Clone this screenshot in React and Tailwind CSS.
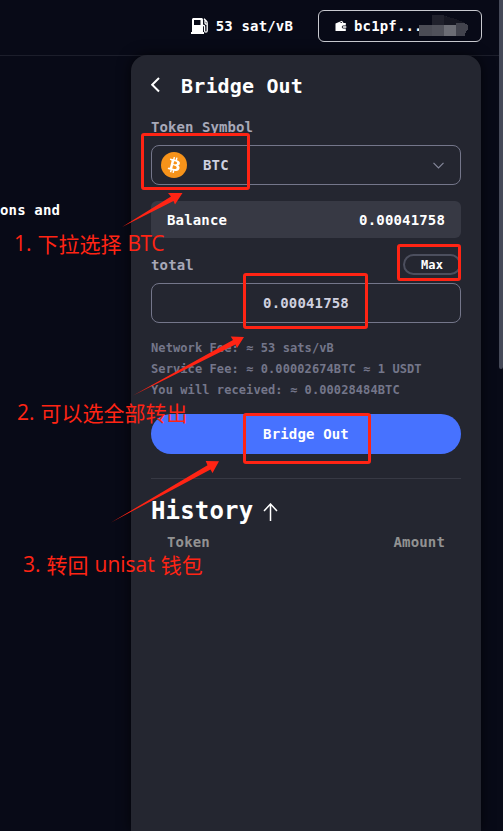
import React from "react";

const fees = [
  "Network Fee: ≈ 53 sats/vB",
  "Service Fee: ≈ 0.00002674BTC ≈ 1 USDT",
  "You will received: ≈ 0.00028484BTC",
];

function GasIcon() {
  return (
    <svg width="18" height="17" viewBox="0 0 18 17" fill="none">
      <path fill="#fff" fillRule="evenodd" d="M1 1.500C1 .7 1.700 0 2.500 0h8C11.300 0 12 .7 12 1.500V14h1v2H0v-2h1zM3 2v5h6.500V2z" />
      <path stroke="#fff" strokeWidth="1.300" d="M12 7.500h.8c.6 0 .8.5.8 1.200v4c0 2 2.600 2 2.600 0V5c0-1-.6-1.600-1.200-2.200L13 .8M14 2v3c0 .8.7 1.200 2.200 1.200" />
    </svg>
  );
}

function WalletIcon() {
  return (
    <svg width="12" height="12" viewBox="0 0 12 12">
      <path fill="#fff" fillRule="evenodd" d="M.5 3.500L7 .8 8.600 3h2.200v2.500H8.200c-1.800 0-1.800 3 0 3h2.600V11H.5zM4.500 3H7.300L6.700 2zM8.300 6.300h3v1.400h-3c-.9 0-.9-1.400 0-1.400z" />
    </svg>
  );
}

function Mosaic() {
  return (
    <svg className="-ml-1 -mt-0.5 shrink-0" width="49" height="21" viewBox="0 0 49 21" shapeRendering="crispEdges">
      <path fill="#20212c" d="M13 0h10l10 3v7H13z" />
      <path fill="#161722" d="M25 1l12 3 9 4v2H25z" />
      <path fill="#4b4c55" d="M0 10h13v11H0z" />
      <path fill="#50515a" d="M13 10h12v11H13z" />
      <path fill="#6b6c74" d="M25 10h12v11H25z" />
      <path fill="#42434d" d="M37 8h8l4 2v4l-2 2-1 5h-9z" />
    </svg>
  );
}

function BtcIcon() {
  return (
    <svg width="26" height="26" viewBox="0 0 32 32">
      <circle cx="16" cy="16" r="16" fill="#f7931a" />
      <path
        fill="#fff"
        d="M23.189 14.020c.314-2.096-1.283-3.223-3.465-3.975l.708-2.840-1.728-.43-.69 2.765c-.454-.114-.92-.22-1.385-.326l.695-2.783L15.596 6l-.708 2.839c-.376-.086-.746-.17-1.104-.26l.002-.009-2.384-.595-.46 1.846s1.283.294 1.256.312c.7.175.826.638.805 1.006l-.806 3.235c.048.012.110.030.180.057l-.183-.045-1.130 4.532c-.086.212-.303.531-.793.410.018.025-1.256-.313-1.256-.313l-.858 1.978 2.250.561c.418.105.828.215 1.231.318l-.715 2.872 1.727.430.708-2.840c.472.127.930.245 1.378.357l-.706 2.828 1.728.430.715-2.866c2.948.558 5.164.333 6.097-2.333.752-2.146-.037-3.385-1.588-4.192 1.130-.260 1.980-1.003 2.207-2.538zm-3.950 5.538c-.533 2.147-4.148.986-5.320.695l.950-3.805c1.172.293 4.929.872 4.370 3.110zm.535-5.569c-.487 1.953-3.495.960-4.470.717l.860-3.450c.975.243 4.118.696 3.610 2.733z"
      />
    </svg>
  );
}

function Header() {
  return (
    <header className="flex h-14 items-start justify-end border-b border-[#1c1e2b] pr-[17px] pt-2.5 text-[14px] font-bold text-white">
      <div className="mr-[25px] flex h-8 items-center gap-[7px]">
        <GasIcon />
        <span>53 sat/vB</span>
      </div>
      <div className="flex h-8 w-[164px] items-center rounded-md border border-[#c9cad0] pl-4">
        <WalletIcon />
        <span className="ml-[7px]">bc1pf...</span>
        <Mosaic />
      </div>
    </header>
  );
}

function BridgePanel() {
  return (
    <section className="-mt-px h-[776px] w-[350px] rounded-t-2xl bg-[#242630] px-5 pt-[15px] text-[14px] font-bold leading-5 shadow-[0_0_14px_#000000aa]">
      <div className="flex h-8 items-center text-xl text-white">
        <svg className="-mt-0.5" width="9" height="16" viewBox="0 0 9 16" fill="none" stroke="#fff" strokeWidth="2">
          <path d="M8 1L1.200 7.700 8 14.500" />
        </svg>
        <h1 className="ml-[21px]">Bridge Out</h1>
      </div>
      <div className="mt-[15px] tracking-[0.08px] text-[#a7a8b8]">Token Symbol</div>
      <div className="mt-2 flex h-10 items-center rounded-lg border border-[#74768a] pl-[9px] pr-4 text-[#cfd0df]">
        <BtcIcon />
        <span className="ml-4">BTC</span>
        <svg className="ml-auto" width="11" height="7" viewBox="0 0 11 7" fill="none" stroke="#85879a" strokeWidth="1.200">
          <path d="M.5.8l5 5 5-5" />
        </svg>
      </div>
      <div className="mt-4 flex h-[37px] items-center justify-between rounded-md bg-[#373944] px-4 text-white">
        <span>Balance</span>
        <span>0.00041758</span>
      </div>
      <div className="mt-4 flex h-[21px] items-center justify-between text-[#a7a8b8]">
        <span>total</span>
        <button className="h-[21px] w-[58px] rounded-full border-2 border-[#4c4f5e] pt-px text-xs leading-[17px] text-white">Max</button>
      </div>
      <div className="mt-2 flex h-10 items-center justify-center rounded-lg border border-[#74768a] text-[#cfd0df]">0.00041758</div>
      <div className="mt-[15px] text-xs leading-[21px] tracking-[0.09px] text-[#74768a]">
        {fees.map((fee) => (
          <div key={fee}>{fee}</div>
        ))}
      </div>
      <button className="mt-[13px] h-10 w-full rounded-full bg-[#4772ff] text-white">Bridge Out</button>
      <div className="mt-6 flex h-16 items-center gap-2.5 border-t border-[#373944] text-2xl text-white">
        <h2>History</h2>
        <svg className="mt-0.5" width="15" height="18" viewBox="0 0 15 18" fill="none" stroke="#fff" strokeWidth="1.500">
          <path d="M7.500 18V1M1 8l6.500-7L14 8" />
        </svg>
      </div>
      <div className="-mt-2.5 flex justify-between px-4 text-[#929292]">
        <span>Token</span>
        <span>Amount</span>
      </div>
    </section>
  );
}

const noteClass =
  "absolute flex items-center gap-1.5 whitespace-nowrap font-['Open_Sans','Noto_Sans_CJK_SC',sans-serif] text-[21px] leading-7 tracking-normal text-[#ff2414]";
const cjkClass = "font-['Noto_Sans_CJK_SC',sans-serif] font-normal";

function Annotations() {
  return (
    <div className="pointer-events-none absolute inset-0">
      <div className="absolute left-[141px] top-[133px] h-[57px] w-[109px] rounded-[3px] border-3 border-[#ff2414]" />
      <div className="absolute left-[397px] top-[244px] h-[37px] w-[64px] rounded-[3px] border-3 border-[#ff2414]" />
      <div className="absolute left-[243px] top-[273px] h-14 w-[125px] rounded-[3px] border-3 border-[#ff2414]" />
      <div className="absolute left-[243px] top-[413px] h-[51px] w-[128px] rounded-[3px] border-3 border-[#ff2414]" />
      <svg className="absolute inset-0" width="503" height="831" fill="#ff2414">
        <path d="M122 227L171 196.500 168 193h14.500L175 204.500 173.500 201z" />
        <path d="M133 395.500L233 340 230.700 336.500 244 337 237 348 235.500 344.500z" />
        <path d="M111 522.500L207.500 465.300 205.700 461 219 461.300 212.500 473 210.500 469.500z" />
      </svg>
      <div className={noteClass + " left-[14px] top-[229px]"}>
        <span>1.</span>
        <span className={cjkClass}>下拉选择</span>
        <span className="tracking-[-0.7px]">BTC</span>
      </div>
      <div className={noteClass + " left-[17px] top-[398px]"}>
        <span>2.</span>
        <span className={cjkClass}>可以选全部转出</span>
      </div>
      <div className={noteClass + " left-[23px] top-[550px]"}>
        <span>3.</span>
        <span className={cjkClass}>转回</span>
        <span>unisat</span>
        <span className={cjkClass}>钱包</span>
      </div>
    </div>
  );
}

export default function App() {
  return (
    <div className="relative flex h-[831px] w-[503px] overflow-hidden bg-[#080a17] font-['DejaVu_Sans_Mono',monospace] tracking-[0.01em]">
      <div className="flex w-[499px] flex-col">
        <Header />
        <main className="flex">
          <div className="w-[131px] shrink-0 pt-[144px] text-[14px] font-bold leading-5 text-white">ons and</div>
          <BridgePanel />
        </main>
      </div>
      <div className="h-[369px] w-1 rounded-b-sm bg-[#454958]" />
      <Annotations />
    </div>
  );
}
